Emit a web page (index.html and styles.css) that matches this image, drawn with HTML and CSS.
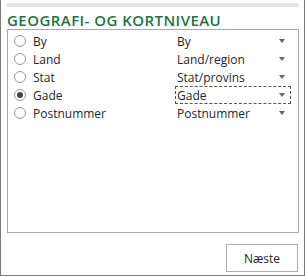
FILE: index.html
```html
<!DOCTYPE html>
<html lang="da">
<head>
    <meta charset="UTF-8">
    <title>Geografi- og kortniveau</title>
    <link rel="stylesheet" href="styles.css">
</head>
<body>
    <div class="frame">
        <div class="topbar"></div>
        <h2 class="heading">GEOGRAFI- OG KORTNIVEAU</h2>

        <div class="panel">
            <div class="row">
                <span class="radio"></span>
                <span class="label">By</span>
                <span class="select">By<span class="arrow"></span></span>
            </div>
            <div class="row">
                <span class="radio"></span>
                <span class="label">Land</span>
                <span class="select">Land/region<span class="arrow"></span></span>
            </div>
            <div class="row">
                <span class="radio"></span>
                <span class="label">Stat</span>
                <span class="select">Stat/provins<span class="arrow"></span></span>
            </div>
            <div class="row">
                <span class="radio checked"></span>
                <span class="label">Gade</span>
                <span class="select focused">Gade<span class="arrow"></span></span>
            </div>
            <div class="row">
                <span class="radio"></span>
                <span class="label">Postnummer</span>
                <span class="select">Postnummer<span class="arrow"></span></span>
            </div>
        </div>

        <div class="footer">
            <button class="button">Næste</button>
        </div>
    </div>
</body>
</html>
```

FILE: styles.css
```css
body {
    margin: 0;
    font-family: "Open Sans", "Noto Sans", sans-serif;
    font-size: 12px;
    color: #262626;
    background: #fff;
}
.frame {
    box-sizing: border-box;
    width: 305px;
    height: 276px;
    border: 1px solid #7a7a7a;
    border-top: none;
    padding: 3px 6px 0 6px;
}
.topbar {
    width: 292px;
    height: 4px;
    background-color: #e6e6e6;
}
.heading {
    box-sizing: border-box;
    margin: 0;
    height: 22px;
    padding-top: 5px;
    line-height: 16px;
    font-size: 15px;
    font-weight: 600;
    color: #217346;
    letter-spacing: 0.45px;
    white-space: nowrap;
}
.panel {
    box-sizing: border-box;
    width: 292px;
    height: 204px;
    border: 1px solid #ababab;
    padding-top: 2px;
}
.row {
    display: flex;
    align-items: center;
    height: 18px;
}
.radio {
    box-sizing: border-box;
    width: 12px;
    height: 12px;
    margin-left: 6px;
    border: 1px solid #9a9a9a;
    border-radius: 50%;
    display: flex;
    align-items: center;
    justify-content: center;
}
.radio.checked::after {
    content: "";
    width: 6px;
    height: 6px;
    border-radius: 50%;
    background-color: #444;
}
.label {
    margin-left: 7px;
    width: 142px;
}
.select {
    box-sizing: border-box;
    display: flex;
    align-items: center;
    justify-content: space-between;
    width: 116px;
    height: 18px;
    padding: 0 5px 0 1px;
    border: 1px solid transparent;
}
.select.focused {
    border: 1px dashed #555;
}
.arrow {
    width: 0;
    height: 0;
    border-left: 3px solid transparent;
    border-right: 3px solid transparent;
    border-top: 4px solid #666;
}
.footer {
    display: flex;
    justify-content: flex-end;
    margin-top: 11px;
}
.button {
    box-sizing: border-box;
    width: 72px;
    height: 28px;
    background: #fff;
    border: 1px solid #acacac;
    font-family: inherit;
    font-size: 12px;
    color: #262626;
    padding: 0;
}
```
